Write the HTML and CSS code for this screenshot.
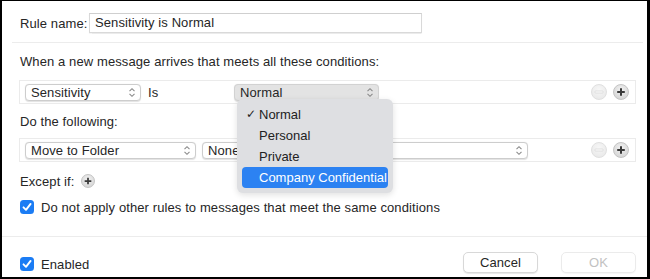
FILE: index.html
```html
<!DOCTYPE html>
<html>
<head>
<meta charset="utf-8">
<link rel="stylesheet" href="styles.css">
</head>
<body>
<div class="window">
  <div class="name-row">
    <span class="label">Rule name:</span>
    <div class="text-input">Sensitivity is Normal</div>
  </div>
  <div class="sep"></div>
  <div class="heading h1">When a new message arrives that meets all these conditions:</div>
  <div class="rule-row cond">
    <div class="popup p-sens"><span>Sensitivity</span><svg class="chev" viewBox="0 0 8 11" width="8" height="11"><path d="M1.5 4.2 L4 1.7 L6.5 4.2 M1.5 6.8 L4 9.3 L6.5 6.8" fill="none" stroke="#8a8a8a" stroke-width="1.1"/></svg></div>
    <span class="is">Is</span>
    <div class="popup p-normal pressed"><span>Normal</span><svg class="chev" viewBox="0 0 8 11" width="8" height="11"><path d="M1.5 4.2 L4 1.7 L6.5 4.2 M1.5 6.8 L4 9.3 L6.5 6.8" fill="none" stroke="#8a8a8a" stroke-width="1.1"/></svg></div>
    <div class="row-btns">
      <span class="circ minus"><svg viewBox="0 0 16 16" width="16" height="16"><rect x="4" y="7" width="8" height="2" rx="0.5" fill="#fbfbfb" stroke="#d2d2d2" stroke-width="0.6"/></svg></span>
      <span class="circ plus"><svg viewBox="0 0 16 16" width="16" height="16"><path d="M8 4.2 V11.8 M4.2 8 H11.8" stroke="#3a3a3a" stroke-width="2"/></svg></span>
    </div>
  </div>
  <div class="heading h2">Do the following:</div>
  <div class="rule-row act">
    <div class="popup p-move"><span>Move to Folder</span><svg class="chev" viewBox="0 0 8 11" width="8" height="11"><path d="M1.5 4.2 L4 1.7 L6.5 4.2 M1.5 6.8 L4 9.3 L6.5 6.8" fill="none" stroke="#8a8a8a" stroke-width="1.1"/></svg></div>
    <div class="popup p-none"><span>None</span><svg class="chev" viewBox="0 0 8 11" width="8" height="11"><path d="M1.5 4.2 L4 1.7 L6.5 4.2 M1.5 6.8 L4 9.3 L6.5 6.8" fill="none" stroke="#8a8a8a" stroke-width="1.1"/></svg></div>
    <div class="row-btns">
      <span class="circ minus"><svg viewBox="0 0 16 16" width="16" height="16"><rect x="4" y="7" width="8" height="2" rx="0.5" fill="#fbfbfb" stroke="#d2d2d2" stroke-width="0.6"/></svg></span>
      <span class="circ plus"><svg viewBox="0 0 16 16" width="16" height="16"><path d="M8 4.2 V11.8 M4.2 8 H11.8" stroke="#3a3a3a" stroke-width="2"/></svg></span>
    </div>
  </div>
  <div class="except">
    <span>Except if:</span>
    <span class="circ plus small"><svg viewBox="0 0 16 16" width="14" height="14"><path d="M8 4.2 V11.8 M4.2 8 H11.8" stroke="#3a3a3a" stroke-width="2"/></svg></span>
  </div>
  <div class="check-row stop">
    <span class="checkbox"><svg viewBox="0 0 14 14" width="14" height="14"><path d="M3.5 7.3 L6 9.8 L10.6 3.9" fill="none" stroke="#fff" stroke-width="1.9" stroke-linecap="round" stroke-linejoin="round"/></svg></span>
    <span>Do not apply other rules to messages that meet the same conditions</span>
  </div>
  <div class="sep full"></div>
  <div class="footer">
    <div class="check-row enabled">
      <span class="checkbox"><svg viewBox="0 0 14 14" width="14" height="14"><path d="M3.5 7.3 L6 9.8 L10.6 3.9" fill="none" stroke="#fff" stroke-width="1.9" stroke-linecap="round" stroke-linejoin="round"/></svg></span>
      <span>Enabled</span>
    </div>
    <div class="buttons">
      <div class="btn">Cancel</div>
      <div class="btn disabled">OK</div>
    </div>
  </div>

  <div class="menu">
    <div class="item"><span class="tick">✓</span>Normal</div>
    <div class="item">Personal</div>
    <div class="item">Private</div>
    <div class="item sel">Company Confidential</div>
  </div>
</div>
</body>
</html>
```

FILE: styles.css
```css
html, body {
  margin: 0;
  padding: 0;
  background: #000;
}
body {
  width: 650px;
  height: 279px;
  overflow: hidden;
}
.window {
  position: relative;
  box-sizing: border-box;
  width: 650px;
  height: 279px;
  border-style: solid;
  border-color: #000;
  border-width: 1px 3px 2px 2px;
  background: #fff;
  font-family: "Liberation Sans", Arial, sans-serif;
  font-size: 13px;
  letter-spacing: 0.1px;
  color: #262626;
  display: flex;
  flex-direction: column;
}
.name-row {
  display: flex;
  align-items: center;
  margin: 12px 0 0 18px;
  height: 20px;
}
.label {
  width: 69px;
}
.text-input {
  box-sizing: border-box;
  width: 333px;
  height: 20px;
  border: 1px solid #d9d9d9;
  border-top-color: #cfcfcf;
  padding-left: 5px;
  line-height: 18px;
  box-shadow: 0 0.5px 1px rgba(0,0,0,0.08);
}
.sep {
  height: 1px;
  background: #ececec;
  margin: 9px 4px 0 10px;
}
.sep.full {
  margin: 21px 0 0 0;
}
.heading {
  margin-left: 18px;
  line-height: 16px;
}
.h1 { margin-top: 11px; }
.h2 { margin-top: 10px; }
.rule-row {
  box-sizing: border-box;
  display: flex;
  align-items: center;
  height: 24px;
  margin: 0 11px 0 17px;
  border: 1px solid #ebebeb;
  padding-left: 5px;
}
.cond { margin-top: 10px; }
.act { margin-top: 8px; }
.popup {
  box-sizing: border-box;
  height: 17px;
  display: flex;
  align-items: center;
  justify-content: space-between;
  border: 1px solid #cdcdcd;
  border-radius: 4px;
  padding: 0 4px 0 5px;
  background: #fff;
  box-shadow: 0 0.5px 1px rgba(0,0,0,0.12);
  line-height: 15px;
}
.popup.pressed {
  background: #e3e3e3;
  border-color: #d2d2d2;
}
.chev { flex: none; }
.p-sens { width: 116px; }
.is { margin-left: 7px; width: 86px; }
.p-normal { width: 145px; }
.p-move { width: 171px; }
.p-none { width: 326px; margin-left: 6px; }
.row-btns {
  margin-left: auto;
  display: flex;
  gap: 6px;
  margin-right: 6px;
}
.circ {
  box-sizing: border-box;
  width: 16px;
  height: 16px;
  border-radius: 50%;
  display: flex;
  align-items: center;
  justify-content: center;
}
.circ.minus {
  background: radial-gradient(circle at 50% 35%, #f7f7f7, #e6e6e6);
  border: 1px solid #e0e0e0;
}
.circ.plus {
  background: radial-gradient(circle at 50% 35%, #f2f2f2, #cfcfcf);
  border: 1px solid #c4c4c4;
}
.circ.small {
  width: 14px;
  height: 14px;
}
.circ svg { display: block; flex: none; }
.except {
  display: flex;
  align-items: center;
  gap: 7px;
  margin: 11px 0 0 18px;
  height: 16px;
}
.check-row {
  display: flex;
  align-items: center;
  gap: 7px;
  height: 16px;
}
.stop {
  margin: 10px 0 0 18px;
}
.checkbox {
  width: 14px;
  height: 14px;
  border-radius: 3.5px;
  background: #1b7cf4;
  display: flex;
  flex: none;
}
.checkbox svg { display: block; }
.footer {
  display: flex;
  align-items: center;
  justify-content: space-between;
  margin: 14px 11px 0 18px;
  height: 22px;
}
.enabled {
  position: relative;
  top: 2px;
}
.buttons {
  display: flex;
  gap: 23px;
}
.btn {
  box-sizing: border-box;
  width: 75px;
  height: 21px;
  border-radius: 5px;
  background: #fff;
  border: 1px solid #d8d8d8;
  box-shadow: 0 1px 1px rgba(0,0,0,0.1);
  text-align: center;
  line-height: 19px;
  color: #262626;
}
.btn.disabled {
  color: #c2c2c2;
  border-color: #ebebeb;
  box-shadow: 0 1px 1px rgba(0,0,0,0.04);
}
.menu {
  position: absolute;
  left: 235px;
  top: 98px;
  width: 156px;
  box-sizing: border-box;
  padding: 5px 5px;
  background: #dedfe2;
  border-radius: 6px;
  box-shadow: 0 2px 6px rgba(0,0,0,0.12);
  letter-spacing: 0;
}
.item {
  height: 21px;
  line-height: 21px;
  padding-left: 17px;
  border-radius: 4px;
  position: relative;
  color: #222;
  white-space: nowrap;
}
.tick {
  position: absolute;
  left: 4px;
  top: 0;
  font-family: "DejaVu Sans", sans-serif;
  font-size: 12px;
}
.item.sel {
  background: #2c82f2;
  color: #fff;
}
```
